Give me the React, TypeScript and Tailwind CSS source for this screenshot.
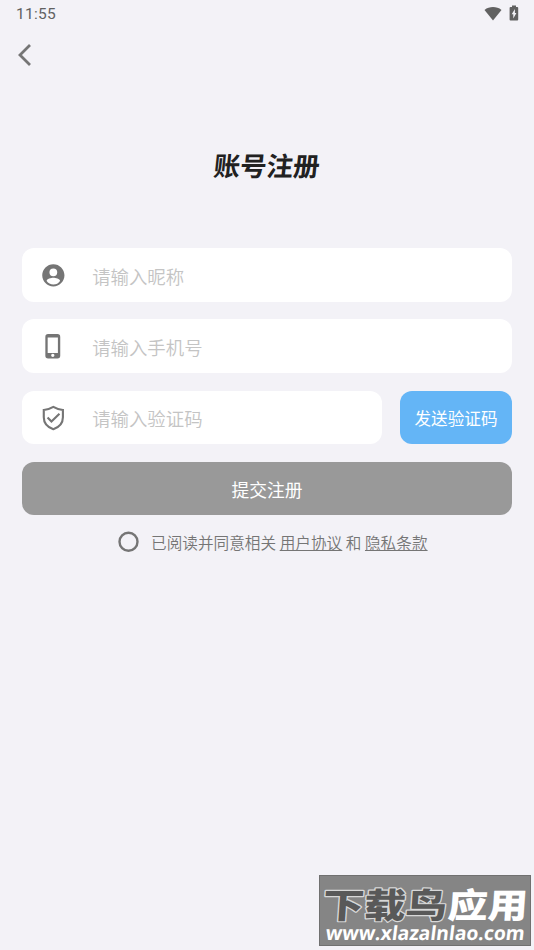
import React from 'react';

interface FieldProps {
  placeholder: string;
  icon: React.ReactNode;
}

const Field: React.FC<FieldProps> = ({ placeholder, icon }) => (
  <label className="flex h-[53.4px] min-w-0 flex-1 items-center rounded-[12px] bg-white pl-[18px]">
    <span className="flex w-[27px] shrink-0 justify-center pt-px text-[#757575]">{icon}</span>
    <input
      className="ml-[25px] min-w-0 flex-1 bg-transparent pt-[2px] text-[18.4px] leading-6 font-[350] outline-none placeholder:text-[#c4c4c4]"
      placeholder={placeholder}
    />
  </label>
);

const UserIcon = () => (
  <svg className="size-[26.7px]" viewBox="0 0 24 24" fill="currentColor">
    <path d="M12 2C6.48 2 2 6.48 2 12s4.48 10 10 10 10-4.48 10-10S17.52 2 12 2zm0 3.8a3.5 3.5 0 1 1 0 7A3.5 3.5 0 0 1 12 5.8zM12 20.2c-2.5 0-4.71-1.28-6-3.22.03-1.99 4-2.8 6-2.8s5.97.81 6 2.8A7.2 7.2 0 0 1 12 20.2z" />
  </svg>
);

const PhoneIcon = () => (
  <svg className="size-[26.7px]" viewBox="0 0 24 24" fill="currentColor">
    <path
      fillRule="evenodd"
      d="M7.300 1h8.400a2.500 2.500 0 0 1 2.500 2.500v17a2.500 2.500 0 0 1-2.500 2.500H7.300a2.500 2.500 0 0 1-2.500-2.500v-17A2.500 2.500 0 0 1 7.300 1zM6.900 4v14h9.200V4zm4.600 14.600a1.500 1.500 0 1 0 0 3 1.500 1.500 0 0 0 0-3z"
    />
  </svg>
);

const ShieldIcon = () => (
  <svg className="size-[26.7px]" viewBox="0 0 24 24" fill="none" stroke="currentColor" strokeWidth="1.9">
    <path d="M12 1.700c2.700 1.600 5.400 2.500 8.600 2.800v6.500c0 4.900-3.200 8.900-8.600 10.800-5.400-1.900-8.600-5.900-8.600-10.800V4.500C6.600 4.200 9.300 3.300 12 1.700z" />
    <path d="m6.800 11.300 3.500 3.600 7.200-7" />
  </svg>
);

const StatusBar = () => (
  <div className="flex h-[27px] items-center justify-between pr-[15px] pl-[16px] text-[#616161]">
    <span className="font-[Roboto] text-[15.5px] leading-5 tracking-[0.3px]">11:55</span>
    <div className="flex items-center gap-[7px] pb-px">
      <svg className="h-[15px] w-[18px]" viewBox="0 0 18 15" fill="currentColor">
        <path d="M9 14.500.5 3.900C5.400.1 12.600.1 17.500 3.900z" />
      </svg>
      <svg className="h-[16px] w-[10px]" viewBox="0 0 10 16">
        <path fill="currentColor" d="M3 .5h4V2h1.300a.9.9 0 0 1 .9.900v11.700a.9.9 0 0 1-.9.900H1.500a.9.9 0 0 1-.9-.900V2.900a.9.9 0 0 1 .9-.900H3z" />
        <path fill="#f3f2f7" d="M5.900 4v4h1.500l-3.100 5.500V9.300H2.700z" />
      </svg>
    </div>
  </div>
);

const Watermark = () => (
  <div className="absolute right-[3px] bottom-[4px] h-[71px] w-[212px] border border-[#707070] bg-[#858585]">
    <svg className="block h-full w-full" viewBox="0 0 210 69">
      <g fontFamily="'Noto Sans CJK SC', sans-serif" fontWeight="900" fontSize="34.5" strokeLinejoin="round">
        <text transform="translate(2 41.5) skewX(-4) scale(1.2 1)" fill="#595959" stroke="#d8d8d8" strokeWidth="2.4" paintOrder="stroke">
          下载鸟
        </text>
        <text transform="translate(127 41.5) skewX(-4) scale(1.16 1)" fill="#fff">
          应用
        </text>
      </g>
      <text textLength="199" lengthAdjust="spacingAndGlyphs" transform="translate(5 63.5) skewX(-7)" fill="#fff" fontFamily="'Open Sans', sans-serif" fontWeight="700" fontSize="19.5">
        www.xlazalnlao.com
      </text>
    </svg>
  </div>
);

export default function App() {
  return (
    <div className="relative h-[950px] w-[534px] overflow-hidden bg-[#f3f2f7] font-['Noto_Sans_CJK_SC',sans-serif]">
      <StatusBar />

      {/* Back */}
      <button className="mt-[16px] ml-[16px] block text-[#757575]">
        <svg className="h-[24px] w-[16px]" viewBox="0 0 16 24" fill="none" stroke="currentColor" strokeWidth="2.8">
          <path d="M14 2 4 12l10 10" />
        </svg>
      </button>

      <h1 className="mt-[78px] flex h-[40px] items-center justify-center text-[26.5px] leading-10 font-bold text-[#212121]">
        <span className="-skew-x-6">账号注册</span>
      </h1>

      <form className="mt-[63.3px] flex flex-col gap-[17.8px] px-[22.2px]">
        <div className="flex">
          <Field placeholder="请输入昵称" icon={<UserIcon />} />
        </div>
        <div className="flex">
          <Field placeholder="请输入手机号" icon={<PhoneIcon />} />
        </div>
        <div className="flex gap-[17.8px]">
          <Field placeholder="请输入验证码" icon={<ShieldIcon />} />
          <button type="button" className="h-[53.4px] w-[111.6px] rounded-[12px] bg-[#64b5f6] pt-[3px] text-[16.6px] text-white">
            发送验证码
          </button>
        </div>
        <button type="button" className="h-[53.4px] rounded-[12px] bg-[#999999] pt-px text-[17.8px] text-white">
          提交注册
        </button>
      </form>

      {/* Agreement */}
      <div className="mt-[14.7px] ml-[118px] flex h-[24px] items-center text-[15.6px] leading-6 text-[#757575]">
        <svg className="mr-[12px] size-[21px] shrink-0" viewBox="0 0 21 21" fill="none" stroke="currentColor" strokeWidth="2.4">
          <circle cx="10.5" cy="10.8" r="9" />
        </svg>
        <p className="font-[350] tracking-[0.05px] whitespace-pre">
          已阅读并同意相关 <a className="underline">用户协议</a> 和 <a className="underline">隐私条款</a>
        </p>
      </div>

      <Watermark />
    </div>
  );
}
